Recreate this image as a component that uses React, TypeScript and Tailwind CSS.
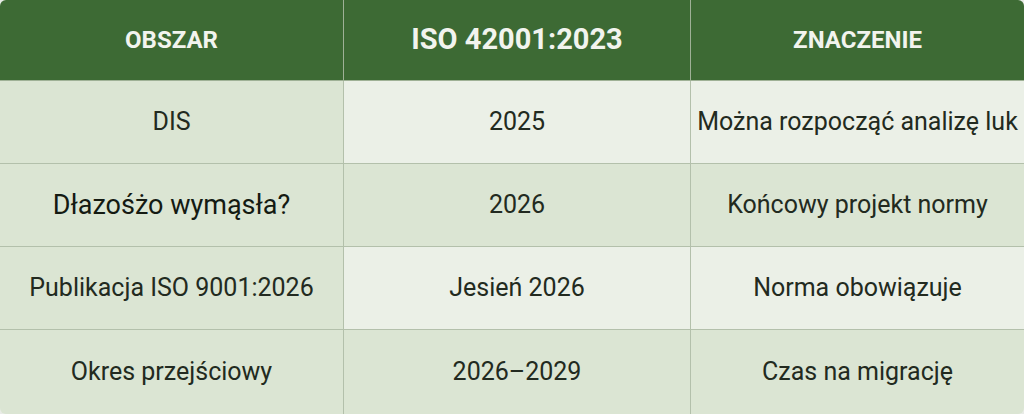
const rows = [
  { area: 'DIS', date: '2025', meaning: 'Można rozpocząć analizę luk', light: [false, true, true] },
  { area: 'Dłazośżo wymąsła?', date: '2026', meaning: 'Końcowy projekt normy', light: [false, false, false] },
  { area: 'Publikacja ISO 9001:2026', date: 'Jesień 2026', meaning: 'Norma obowiązuje', light: [false, true, true] },
  { area: 'Okres przejściowy', date: '2026–2029', meaning: 'Czas na migrację', light: [false, false, false] },
];

export default function App() {
  return (
    <div className="w-[1024px] h-[414px] bg-[#e9ece7] overflow-hidden" style={{ fontFamily: 'Roboto, "Noto Sans", sans-serif' }}>
      <div className="h-full rounded-[6px] overflow-hidden grid grid-cols-[344px_347px_1fr] grid-rows-[81px_83px_83px_83px_84px]">
        <div className="bg-[#3d6a34] border-b border-r border-[#9fb196] flex items-center justify-center text-[#f2f4ee] font-bold text-[24px]">
          OBSZAR
        </div>
        <div className="bg-[#3d6a34] border-b border-r border-[#9fb196] flex items-center justify-center text-[#f2f4ee] font-bold text-[29px]">
          ISO 42001:2023
        </div>
        <div className="bg-[#3d6a34] border-b border-[#9fb196] flex items-center justify-center text-[#f2f4ee] font-bold text-[24px]">
          ZNACZENIE
        </div>
        {rows.map((r, i) => {
          const last = i === rows.length - 1;
          const cells = [r.area, r.date, r.meaning];
          return cells.map((c, ci) => (
            <div
              key={`${i}-${ci}`}
              className={[
                'flex items-center justify-center whitespace-nowrap',
                i === 1 && ci === 0 ? 'text-[27px] text-[#141a12]' : 'text-[25px] text-[#222a20]',
                r.light[ci] ? 'bg-[#ebf0e7]' : 'bg-[#dbe5d3]',
                last ? '' : 'border-b',
                ci < 2 ? 'border-r' : '',
                'border-[#b3c0ab]',
              ].join(' ')}
            >
              {c}
            </div>
          ));
        })}
      </div>
    </div>
  );
}
